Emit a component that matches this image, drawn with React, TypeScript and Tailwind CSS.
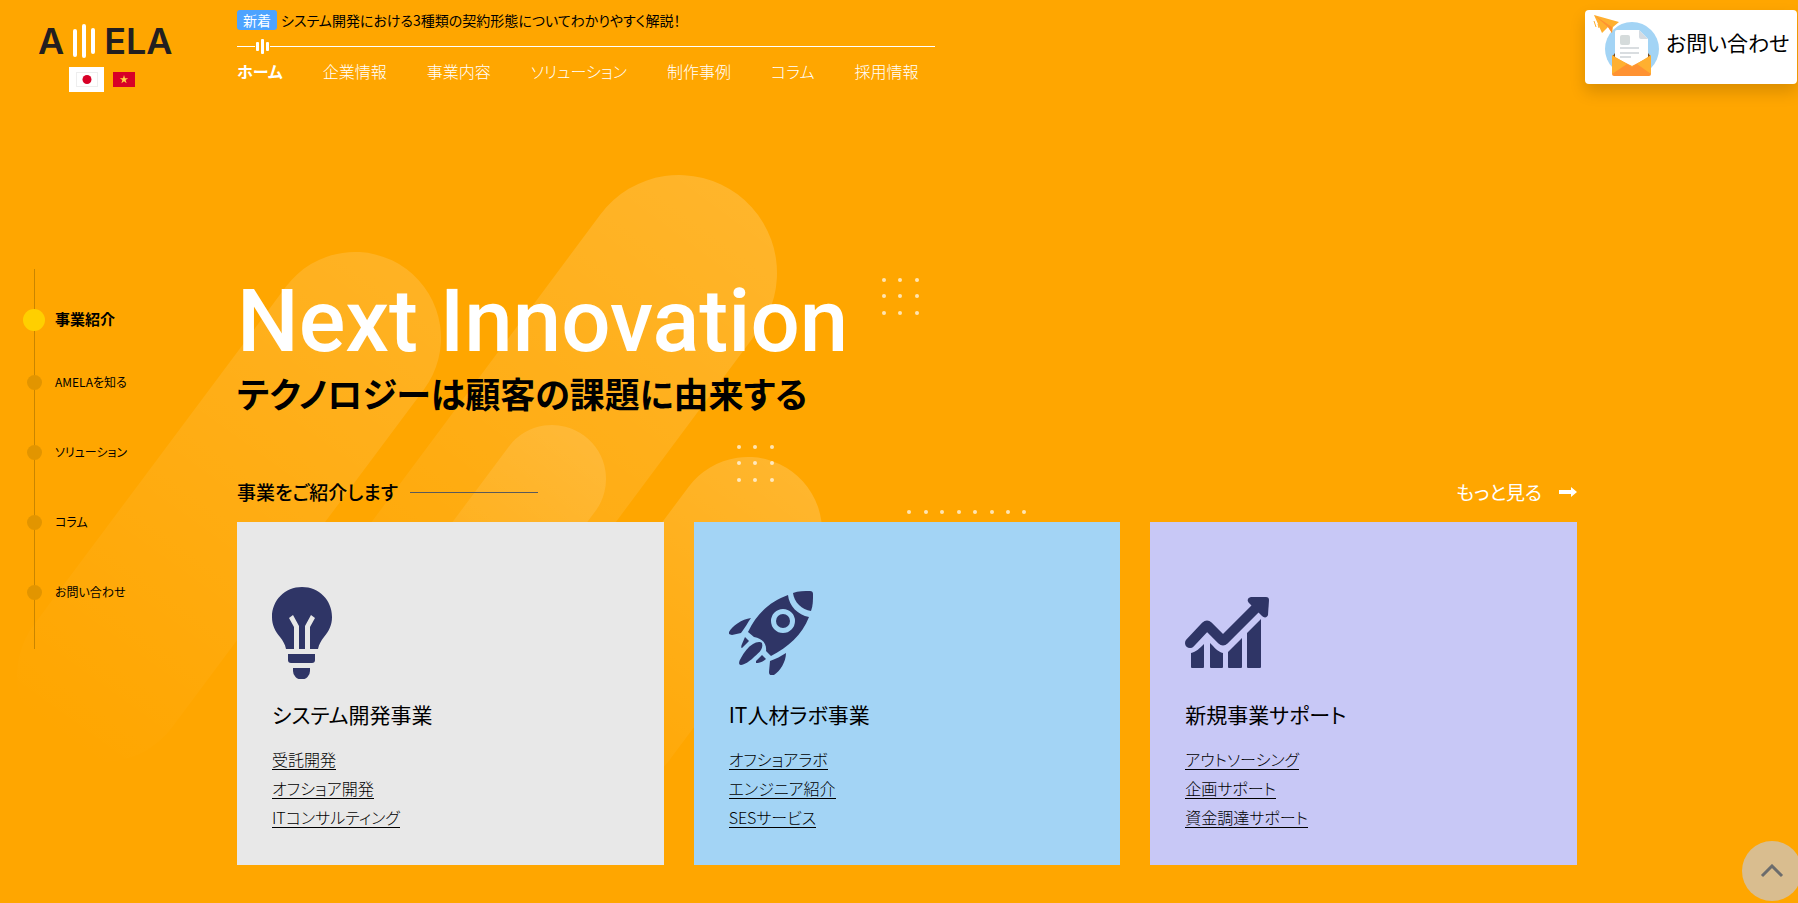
import React from 'react';

const steps = [
  { label: '事業紹介', active: true },
  { label: 'AMELAを知る', active: false },
  { label: 'ソリューション', active: false },
  { label: 'コラム', active: false },
  { label: 'お問い合わせ', active: false },
];

const menu = ['ホーム', '企業情報', '事業内容', 'ソリューション', '制作事例', 'コラム', '採用情報'];

const BulbIcon = () => (
  <svg width="60" height="92" viewBox="0 0 60 92" fill="#2f3566" aria-hidden="true">
    <path d="M30 0C13 0 0 13 0 30c0 8 3 14 8 20 3 4 5 7 6 12h8V40l-5-9 4-3 6 11v23h6V39l6-11 4 3-5 9v22h8c1-5 3-8 6-12 5-6 8-12 8-20C60 13 47 0 30 0z" />
    <path d="M16 67h27v6a3 3 0 0 1-3 3H19a3 3 0 0 1-3-3z" />
    <path d="M21 81h17v3a8 8 0 0 1-17 0z" />
  </svg>
);

const RocketIcon = () => (
  <svg width="84" height="84" viewBox="0 0 84 84" fill="#2f3566" aria-hidden="true">
    <path d="M64 2C69 0 76 0 81 0c2 0 3 1 3 3 0 6 0 12-2 17C73 19 65 11 64 2z" />
    <path
      fillRule="evenodd"
      d="M59 4C60 15 69 24 80 26 73 44 59 56 42 65l-5-5c1-7-4-13-12-14l-6-5C28 22 42 10 59 4zM54 18a12 12 0 1 0 0 24 12 12 0 0 0 0-24z"
    />
    <circle cx="54" cy="30" r="7" />
    <path d="M22 27C13 28 3 35 0 41c-1 2 1 3 3 3l9-2c4-5 7-11 10-15z" />
    <path d="M57 62c0 9-6 18-12 22-3 1-5 0-5-3l1-11c6-2 11-5 16-8z" />
    <path d="M33 52c2 7-5 11-9 15-3 3-9 7-12 7-3 0-2-4 0-7 3-6 7-11 12-14 3-2 7-3 9-1z" />
    <path d="M16 46l4 4-7 7c-1 0-1-2 0-4zM33 64l4 4c-3 3-7 4-10 4v-2z" />
  </svg>
);

const ChartIcon = () => (
  <svg width="84" height="84" viewBox="0 0 84 84" fill="#2f3566" aria-hidden="true">
    <path d="M5 52L21 35q1-1 2 0l14 14q1 1 2 0l33-33" fill="none" stroke="#2f3566" strokeWidth="10" strokeLinecap="round" strokeLinejoin="round" />
    <path d="M66 6h15q3 0 3 3l-1 15c-1 3-4 3-6 1L64 12c-2-2-2-5 2-6z" />
    <path d="M6 62c5-1 9-5 13-9v23q0 1-1 1H7q-1 0-1-1zM25 52c4 4 8 9 13 10v14q0 1-1 1H26q-1 0-1-1zM43 61l14-14v29q0 1-1 1H44q-1 0-1-1zM62 42l14-14v48q0 1-1 1H63q-1 0-1-1z" />
  </svg>
);

const cards = [
  {
    title: 'システム開発事業',
    color: 'bg-[#e8e8e8]',
    icon: <BulbIcon />,
    links: ['受託開発', 'オフショア開発', 'ITコンサルティング'],
  },
  {
    title: 'IT人材ラボ事業',
    color: 'bg-[#a3d4f5]',
    icon: <RocketIcon />,
    links: ['オフショアラボ', 'エンジニア紹介', 'SESサービス'],
  },
  {
    title: '新規事業サポート',
    color: 'bg-[#c8c8f6]',
    icon: <ChartIcon />,
    links: ['アウトソーシング', '企画サポート', '資金調達サポート'],
  },
];

const dots = [
  ...[280, 296, 313].flatMap((y) => [884, 900, 917].map((x) => ({ x, y }))),
  ...[447, 463, 480].flatMap((y) => [739, 755, 772].map((x) => ({ x, y }))),
  ...[909, 926, 942, 959, 975, 992, 1008, 1024].map((x) => ({ x, y: 512 })),
];

const Backdrop = () => (
  <svg className="absolute inset-0 h-full w-full" aria-hidden="true">
    <defs>
      <linearGradient id="fadeLeft" gradientUnits="userSpaceOnUse" x1="400" y1="270" x2="60" y2="740">
        <stop offset="0" stopColor="#fff" stopOpacity="0.14" />
        <stop offset="1" stopColor="#fff" stopOpacity="0" />
      </linearGradient>
      <linearGradient id="fadeCenter" gradientUnits="userSpaceOnUse" x1="740" y1="190" x2="340" y2="730">
        <stop offset="0" stopColor="#fff" stopOpacity="0.17" />
        <stop offset="1" stopColor="#fff" stopOpacity="0" />
      </linearGradient>
      <linearGradient id="fadeSmall" gradientUnits="userSpaceOnUse" x1="585" y1="435" x2="380" y2="710">
        <stop offset="0" stopColor="#fff" stopOpacity="0.13" />
        <stop offset="1" stopColor="#fff" stopOpacity="0" />
      </linearGradient>
      <linearGradient id="fadeRight" gradientUnits="userSpaceOnUse" x1="790" y1="470" x2="560" y2="780">
        <stop offset="0" stopColor="#fff" stopOpacity="0.18" />
        <stop offset="1" stopColor="#fff" stopOpacity="0" />
      </linearGradient>
    </defs>
    <g fill="none" strokeLinecap="round">
      <path d="M355 338L103 676" stroke="url(#fadeLeft)" strokeWidth="172" />
      <path d="M679 273L400 648" stroke="url(#fadeCenter)" strokeWidth="196" />
      <path d="M552 479L420 656" stroke="url(#fadeSmall)" strokeWidth="108" />
      <path d="M748 531L610 716" stroke="url(#fadeRight)" strokeWidth="148" />
    </g>
    {dots.map((dot) => (
      <circle key={`${dot.x}-${dot.y}`} cx={dot.x} cy={dot.y} r="2" fill="#fff" fillOpacity="0.7" />
    ))}
  </svg>
);

const Logo = () => (
  <a href="#" aria-label="AMELA" className="flex h-[34px] items-center font-['Inter',sans-serif] text-4xl leading-none font-semibold text-[#231f20]">
    <span>A</span>
    <svg width="24" height="34" viewBox="0 0 24 34" fill="#fff" className="mx-2" aria-hidden="true">
      <rect x="1" y="5" width="4" height="28" rx="2" />
      <rect x="10" y="0" width="4" height="34" rx="2" />
      <rect x="19" y="4" width="4" height="26" rx="2" />
    </svg>
    <span>ELA</span>
  </a>
);

const Sidebar = () => (
  <aside className="w-[237px] shrink-0">
    <div className="flex h-[269px] flex-col pt-6 pl-[38px]">
      <Logo />
      <div className="mt-[9px] ml-[31px] flex items-center gap-[9px]">
        <button type="button" aria-label="日本語" className="flex h-[25px] w-[35px] items-center justify-center bg-white">
          <svg width="22" height="15" viewBox="0 0 22 15" aria-hidden="true">
            <rect x="0.5" y="0.5" width="21" height="14" fill="#fff" stroke="#eee" />
            <circle cx="11" cy="7.5" r="4.5" fill="#d80027" />
          </svg>
        </button>
        <button type="button" aria-label="Tiếng Việt">
          <svg width="22" height="15" viewBox="0 0 22 15" aria-hidden="true">
            <rect width="22" height="15" fill="#d80027" />
            <path d="M11 3l1 3.200h3.200l-2.600 1.900 1 3.100-2.600-1.900-2.600 1.900 1-3.100-2.600-1.900H10z" fill="#ffda44" />
          </svg>
        </button>
      </div>
    </div>
    <nav className="relative pt-6 pb-[22px] pl-[23px]">
      <div className="absolute inset-y-0 left-[34px] w-px bg-[#c98500]" />
      <ul className="relative">
        {steps.map((step) => (
          <li key={step.label} className={step.active ? 'h-[54px]' : 'h-[70px]'}>
            <a href="#" className="flex h-full items-center gap-[10px]">
              <span className="flex w-[22px] justify-center">
                <span className={step.active ? 'h-[22px] w-[22px] rounded-full bg-[#ffcf00]' : 'h-[15px] w-[15px] rounded-full bg-[#e29500]'} />
              </span>
              <span className={step.active ? 'pb-[2px] text-[15px] font-bold' : 'text-xs'}>{step.label}</span>
            </a>
          </li>
        ))}
      </ul>
    </nav>
  </aside>
);

const Header = () => (
  <header className="pt-[10px]">
    <div className="flex h-5 items-center gap-1 text-sm">
      <span className="flex h-5 items-center rounded-[3px] bg-[#4da3ff] px-[6px] text-white">新着</span>
      <a href="#">システム開発における3種類の契約形態についてわかりやすく解説！</a>
    </div>
    <div className="mt-2 flex h-4 w-[698px] items-center">
      <span className="h-px w-[18px] bg-white" />
      <svg width="15" height="16" viewBox="0 0 15 16" fill="#fff" aria-hidden="true">
        <rect x="1" y="4" width="3" height="9" rx="1" />
        <rect x="6" y="1" width="3" height="15" rx="1" />
        <rect x="11" y="4" width="3" height="9" rx="1" />
      </svg>
      <span className="h-px flex-1 bg-white" />
    </div>
    <nav className="mt-[5px] flex h-6 items-center gap-10 text-base text-white">
      {menu.map((item, index) => (
        <a key={item} href="#" className={index === 0 ? 'font-bold' : 'font-light'}>
          {item}
        </a>
      ))}
    </nav>
  </header>
);

const ContactButton = () => (
  <a href="#" className="absolute top-[10px] right-px flex h-[74px] w-[212px] items-center gap-1 rounded bg-white pl-2 shadow-[0_8px_16px_rgba(0,0,0,0.15)]">
    <svg width="69" height="66" viewBox="0 0 69 66" className="shrink-0" aria-hidden="true">
      <circle cx="39" cy="35" r="27" fill="#a3d4f5" />
      <path d="M19 43l3-4h33l3 4-6 8H25z" fill="#7a4a1c" />
      <path d="M24 16h22l9 9v28H22V18q0-2 2-2z" fill="#fff" />
      <path d="M46 16l9 9h-7q-2 0-2-2z" fill="#d5dbe1" />
      <rect x="27" y="21" width="10" height="10" rx="2" fill="#d5dbdb" />
      <path d="M27 34h19M27 39h19M27 43h11" stroke="#d9dde0" strokeWidth="2" />
      <path d="M19 42l20 10 19-10v18q0 2-2 2H21q-2 0-2-2z" fill="#ff9232" />
      <path d="M19 41l17 10q3 2 6 0l16-10v19L44 50l-5 3-5-3-15 10z" fill="#ffb030" />
      <path d="M1 1l25 7-6 5-1 6-4-6-6 6z" fill="#ffb030" />
      <path d="M1 1l14 12 4 6v-6z" fill="#ff9232" />
      <path d="M1 7l2 6M5 10l1 4" stroke="#ffb030" strokeWidth="1" />
    </svg>
    <span className="pb-2 text-[21px] whitespace-nowrap">お問い合わせ</span>
  </a>
);

const App = () => {
  return (
    <div className="relative flex min-h-screen overflow-hidden bg-[#ffa600] font-['Noto_Sans_CJK_JP',sans-serif] text-black [font-feature-settings:'palt']">
      <Backdrop />
      <div className="relative flex flex-1">
        <Sidebar />
        <main className="min-w-0 flex-1 pr-[221px] pb-9">
          <Header />
          <h1 className="mt-[190px] font-['Roboto',sans-serif] text-[87px] leading-[96px] font-medium text-white">Next Innovation</h1>
          <p className="text-[35px] leading-[48px] font-bold">テクノロジーは顧客の課題に由来する</p>
          <div className="mt-[60px] flex h-[30px] items-center justify-between">
            <h2 className="flex items-center gap-3 text-[19px] font-medium">
              事業をご紹介します
              <span className="h-px w-32 bg-[#5a5a5a]" />
            </h2>
            <a href="#" className="flex items-center gap-4 text-[19px] text-white">
              もっと見る
              <svg width="19" height="10" viewBox="0 0 19 10" fill="#fff" aria-hidden="true">
                <path d="M1 3h12V0l6 5-6 5V7H1z" />
              </svg>
            </a>
          </div>
          <div className="mt-[15px] grid grid-cols-3 gap-[30px]">
            {cards.map((card) => (
              <section key={card.title} className={`h-[343px] px-[35px] pt-[60px] ${card.color}`}>
                <div className="flex h-[102px] items-center">{card.icon}</div>
                <h3 className="mt-[15px] text-[21px] leading-[30px]">{card.title}</h3>
                <ul className="mt-4">
                  {card.links.map((link) => (
                    <li key={link} className="flex h-[29px] items-center">
                      <a href="#" className="border-b border-black text-base leading-5 font-light">
                        {link}
                      </a>
                    </li>
                  ))}
                </ul>
              </section>
            ))}
          </div>
        </main>
      </div>
      <ContactButton />
      <button
        type="button"
        aria-label="ページの先頭へ"
        className="fixed -right-1 bottom-[2px] flex h-[60px] w-[60px] items-center justify-center rounded-full bg-[#d9bd8f]"
      >
        <svg width="24" height="14" viewBox="0 0 24 14" fill="none" stroke="#6c6c6c" strokeWidth="3" aria-hidden="true">
          <path d="M2 12L12 2l10 10" />
        </svg>
      </button>
    </div>
  );
};

export default App;
